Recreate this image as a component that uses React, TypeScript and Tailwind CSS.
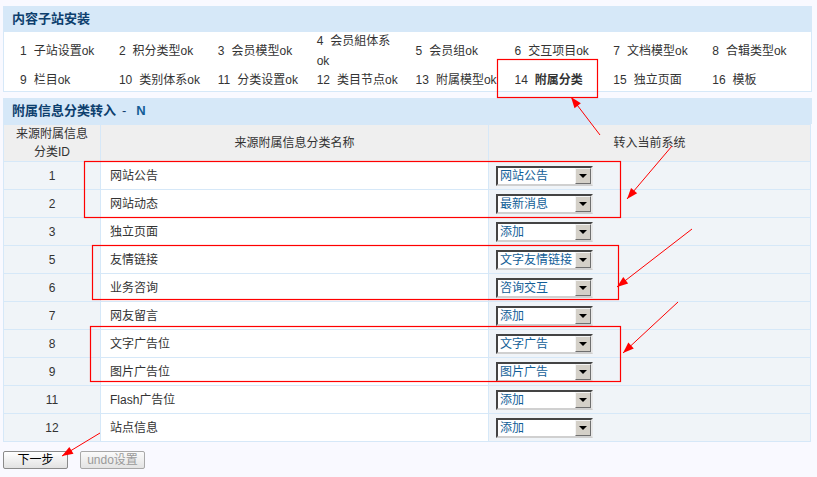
import React from "react"

const steps = [
  { n: 1, label: "子站设置ok" },
  { n: 2, label: "积分类型ok" },
  { n: 3, label: "会员模型ok" },
  { n: 4, label: "会员組体系", tail: "ok" },
  { n: 5, label: "会员组ok" },
  { n: 6, label: "交互项目ok" },
  { n: 7, label: "文档模型ok" },
  { n: 8, label: "合辑类型ok" },
  { n: 9, label: "栏目ok" },
  { n: 10, label: "类别体系ok" },
  { n: 11, label: "分类设置ok" },
  { n: 12, label: "类目节点ok" },
  { n: 13, label: "附属模型ok" },
  { n: 14, label: "附属分类", current: true },
  { n: 15, label: "独立页面" },
  { n: 16, label: "模板" },
]

const rows = [
  { id: 1, name: "网站公告", target: "网站公告" },
  { id: 2, name: "网站动态", target: "最新消息" },
  { id: 3, name: "独立页面", target: "添加" },
  { id: 5, name: "友情链接", target: "文字友情链接" },
  { id: 6, name: "业务咨询", target: "咨询交互" },
  { id: 7, name: "网友留言", target: "添加" },
  { id: 8, name: "文字广告位", target: "文字广告" },
  { id: 9, name: "图片广告位", target: "图片广告" },
  { id: 11, name: "Flash广告位", target: "添加" },
  { id: 12, name: "站点信息", target: "添加" },
]

// annotation marks drawn over the page
const boxes = [
  [497, 59, 100, 38],
  [84, 161, 536, 56],
  [92, 245, 526, 54],
  [90, 326, 530, 55],
]
const arrows = [
  [600, 135, 571, 97],
  [672, 146, 627, 199],
  [692, 229, 617, 287],
  [678, 302, 623, 353],
  [100, 433, 62, 456],
]

function arrowHead(sx: number, sy: number, tx: number, ty: number) {
  const len = Math.hypot(tx - sx, ty - sy)
  const dx = (tx - sx) / len
  const dy = (ty - sy) / len
  const bx = tx - dx * 11
  const by = ty - dy * 11
  return `${tx},${ty} ${bx - dy * 4},${by + dx * 4} ${bx + dy * 4},${by - dx * 4}`
}

function FakeSelect({ value }: { value: string }) {
  return (
    <div className="flex h-[20px] w-[97px] border-2 border-t-[#444] border-l-[#444] border-b-[#d0d0d0] border-r-[#e8e8e8] bg-white">
      <div className="flex-1 overflow-hidden whitespace-nowrap pl-[2px] text-[12px] leading-[16px] text-[#125e97]">{value}</div>
      <div className="flex w-[16px] items-center justify-center border border-t-[#f4f4f4] border-l-[#f4f4f4] border-b-[#6f6f6f] border-r-[#6f6f6f] bg-[#d4d0c8]">
        <div className="h-0 w-0 border-x-[4px] border-t-[4px] border-x-transparent border-t-black" />
      </div>
    </div>
  )
}

export default function App() {
  return (
    <div
      className="relative h-[477px] w-[817px] overflow-hidden bg-[#f9f9ff] pt-[6px] text-[12px] text-[#333]"
      style={{ fontFamily: '"Liberation Sans", "Noto Sans CJK SC", sans-serif' }}
    >
      {/* 内容子站安装 */}
      <div className="ml-[3px] w-[809px]">
        <div className="flex h-[26px] items-center bg-[#d6e8f8] pl-[9px] text-[13px] font-bold text-[#0d3f6e]">内容子站安装</div>
        <div className="grid h-[60px] grid-cols-[repeat(8,98.9px)] grid-rows-[34px_24px] border-x border-b border-[#d6e8f8] bg-white pl-[16px] pt-[2px]">
          {steps.map(s => (
            <div key={s.n} className={`flex items-center leading-[20px] ${s.current ? "font-bold" : ""}`}>
              <div>
                <span className="font-normal">{s.n}</span>
                <span className="ml-[7px]">{s.label}</span>
                {s.tail && (
                  <>
                    <br />
                    <span>{s.tail}</span>
                  </>
                )}
              </div>
            </div>
          ))}
        </div>
      </div>

      {/* 附属信息分类转入 */}
      <div className="ml-[3px] mt-[6px] w-[809px]">
        <div className="flex h-[26px] items-center bg-[#d6e8f8] pl-[9px] text-[13px] font-bold text-[#0d3f6e]">
          附属信息分类转入<span className="ml-[6px] font-normal">-</span>
          <span className="ml-[10px] text-[#125e97]">N</span>
        </div>
        <table className="w-[808px] table-fixed border-collapse">
          <colgroup>
            <col className="w-[97px]" />
            <col className="w-[388px]" />
            <col />
          </colgroup>
          <thead>
            <tr className="h-[36px] bg-[#efefef]">
              <th className="border border-[#d6e8f8] p-0 text-center font-normal leading-[18px]">
                来源附属信息
                <br />
                分类ID
              </th>
              <th className="border border-[#d6e8f8] p-0 text-center font-normal">来源附属信息分类名称</th>
              <th className="border border-[#d6e8f8] p-0 text-center font-normal">转入当前系统</th>
            </tr>
          </thead>
          <tbody>
            {rows.map(r => (
              <tr key={r.id} className="h-[28px]">
                <td className="border border-[#d6e8f8] bg-[#f0f4f8] p-0 text-center">{r.id}</td>
                <td className="border border-[#d6e8f8] bg-white py-0 pl-[9px]">{r.name}</td>
                <td className="border border-[#d6e8f8] bg-[#f0f4f8] py-0 pl-[7px]">
                  <FakeSelect value={r.target} />
                </td>
              </tr>
            ))}
          </tbody>
        </table>
      </div>

      <div className="ml-[3px] mt-[9px] flex gap-[12px]">
        <button className="h-[18px] w-[65px] rounded-[2px] border border-[#8a8a8a] bg-gradient-to-b from-white to-[#e2e2e2] text-[12px] leading-[14px] text-black">
          下一步
        </button>
        <button className="h-[18px] w-[65px] rounded-[2px] border border-[#a8a8a8] bg-gradient-to-b from-[#fafafa] to-[#e4e4e4] text-[12px] leading-[14px] text-[#9a9a9a]">
          undo设置
        </button>
      </div>

      <svg className="pointer-events-none absolute left-0 top-0" width="817" height="477">
        {boxes.map(([x, y, w, h], i) => (
          <rect key={i} x={x + 0.5} y={y + 0.5} width={w} height={h} fill="none" stroke="#ff0000" strokeWidth="1.2" />
        ))}
        {arrows.map(([sx, sy, tx, ty], i) => (
          <g key={i}>
            <line x1={sx} y1={sy} x2={tx} y2={ty} stroke="#ff0000" strokeWidth="1" />
            <polygon points={arrowHead(sx, sy, tx, ty)} fill="#ff0000" />
          </g>
        ))}
      </svg>
    </div>
  )
}
